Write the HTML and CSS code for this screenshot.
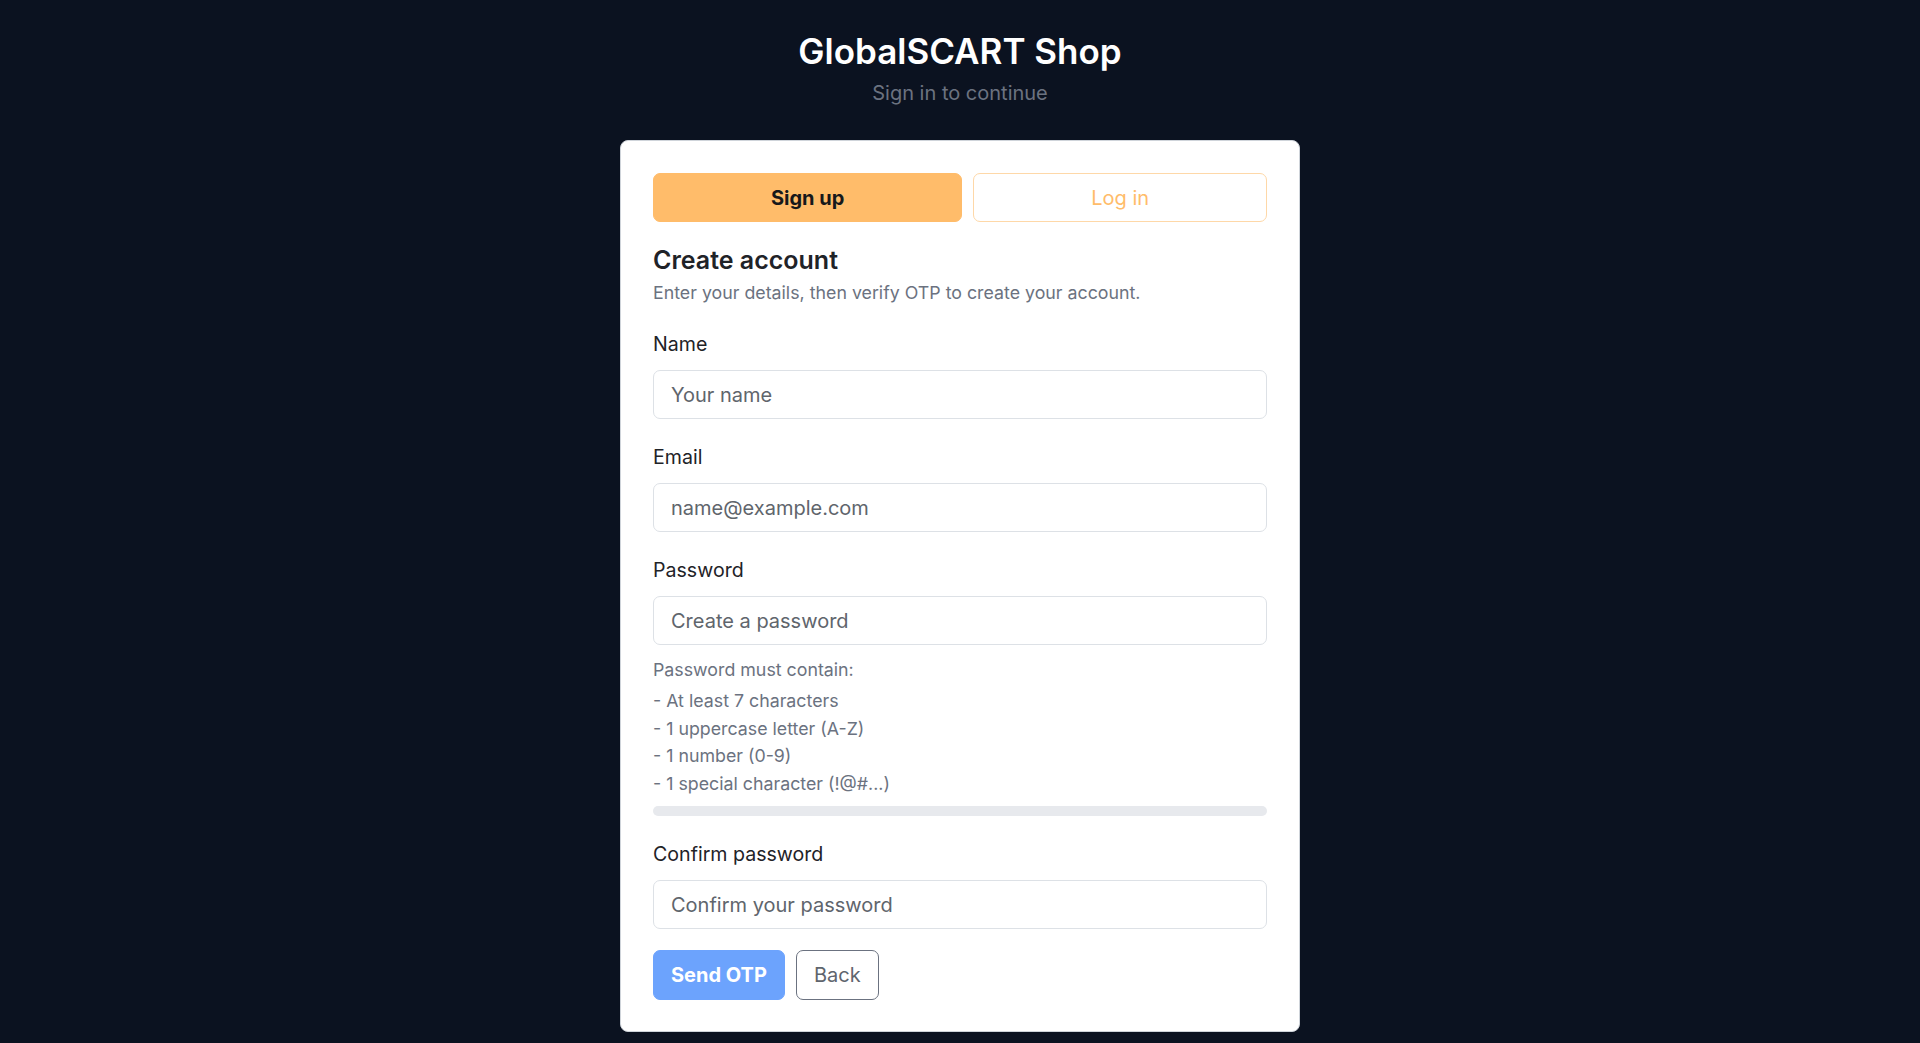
FILE: index.html
```html
<!DOCTYPE html>
<html lang="en">
<head>
    <meta charset="UTF-8">
    <title>GlobalSCART Shop</title>
    <link rel="stylesheet" href="styles.css">
</head>
<body>
    <header class="brand">
        <h1>GlobalSCART Shop</h1>
        <p class="brand-sub">Sign in to continue</p>
    </header>

    <main class="auth-card">
        <div class="tabs">
            <button class="tab active">Sign up</button>
            <button class="tab">Log in</button>
        </div>

        <h2 class="card-title">Create account</h2>
        <p class="card-desc">Enter your details, then verify OTP to create your account.</p>

        <form class="form">
            <div class="field">
                <label for="name">Name</label>
                <input id="name" type="text" placeholder="Your name">
            </div>

            <div class="field">
                <label for="email">Email</label>
                <input id="email" type="email" placeholder="name@example.com">
            </div>

            <div class="field">
                <label for="password">Password</label>
                <input id="password" type="password" placeholder="Create a password">
            </div>

            <div class="rules">
                <p class="rules-title">Password must contain:</p>
                <ul>
                    <li>- At least 7 characters</li>
                    <li>- 1 uppercase letter (A-Z)</li>
                    <li>- 1 number (0-9)</li>
                    <li>- 1 special character (!@#...)</li>
                </ul>
                <div class="strength"><div class="strength-fill" style="width: 0%"></div></div>
            </div>

            <div class="field">
                <label for="confirm">Confirm password</label>
                <input id="confirm" type="password" placeholder="Confirm your password">
            </div>

            <div class="actions">
                <button type="button" class="btn btn-primary">Send OTP</button>
                <button type="button" class="btn btn-outline">Back</button>
            </div>
        </form>
    </main>
</body>
</html>
```

FILE: styles.css
```css
:root {
    --page-bg: #0b1220;
    --card-bg: #ffffff;
    --orange: #ffbc6a;
    --orange-soft: #fed8a8;
    --blue: #6ca3fd;
    --text: #1f2328;
    --muted: #6b7280;
    --field-border: #dde1e6;
}

* {
    margin: 0;
    padding: 0;
    box-sizing: border-box;
}

body {
    font-family: Inter, "Noto Sans", sans-serif;
    background-color: var(--page-bg);
    color: var(--text);
    padding-top: 31px;
    padding-bottom: 11px;
}

.brand {
    text-align: center;
}

.brand h1 {
    color: #ffffff;
    font-size: 35px;
    line-height: 40px;
    font-weight: 600;
}

.brand-sub {
    margin-top: 10px;
    color: var(--muted);
    font-size: 20px;
    line-height: 24px;
}

.auth-card {
    width: 680px;
    margin: 35px auto 0;
    background-color: var(--card-bg);
    border: 1px solid #cfd4da;
    border-radius: 8px;
    padding: 32px 32px 31px;
}

.tabs {
    display: flex;
    gap: 11px;
}

.tab {
    flex: 1 1 auto;
    height: 49px;
    border-radius: 7px;
    font-family: inherit;
    font-size: 20px;
    cursor: pointer;
    background-color: #ffffff;
    border: 1px solid var(--orange-soft);
    color: var(--orange);
}

.tab.active {
    background-color: var(--orange);
    border-color: var(--orange);
    color: #17181a;
    font-weight: 700;
}

.card-title {
    margin-top: 23px;
    font-size: 25px;
    line-height: 30px;
    font-weight: 600;
}

.card-desc {
    margin-top: 6px;
    font-size: 17.8px;
    line-height: 24px;
    color: var(--muted);
}

.form {
    margin-top: 27px;
}

.field label {
    display: block;
    font-size: 19.6px;
    line-height: 24px;
    margin-bottom: 14px;
}

.field input {
    display: block;
    width: 100%;
    height: 49px;
    padding: 0 17px;
    border: 1px solid var(--field-border);
    border-radius: 7px;
    font-family: inherit;
    font-size: 20px;
    color: var(--text);
}

.field input::placeholder {
    color: #60656c;
}

.field + .field {
    margin-top: 26px;
}

.rules {
    margin-top: 13px;
    color: var(--muted);
    font-size: 17.8px;
}

.rules-title {
    line-height: 24px;
}

.rules ul {
    list-style: none;
    margin-top: 5px;
    line-height: 27.6px;
}

.strength {
    margin-top: 9px;
    height: 10px;
    border-radius: 5px;
    background-color: #e7e9ed;
    overflow: hidden;
}

.strength-fill {
    height: 100%;
    background-color: var(--orange);
}

.rules + .field {
    margin-top: 26px;
}

.actions {
    display: flex;
    gap: 11px;
    margin-top: 21px;
}

.btn {
    height: 50px;
    padding: 0 17px;
    border-radius: 7px;
    font-family: inherit;
    font-size: 20px;
    cursor: pointer;
}

.btn-primary {
    background-color: var(--blue);
    border: 1px solid var(--blue);
    color: #ffffff;
    font-weight: 700;
}

.btn-outline {
    background-color: #ffffff;
    border: 1px solid #6b7280;
    color: #5f656d;
}
```
